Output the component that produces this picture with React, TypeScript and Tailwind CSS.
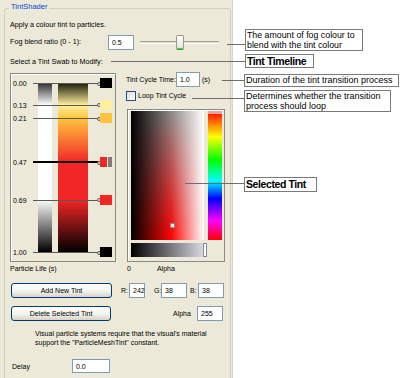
import React from "react";

const TRACK = 169;

const swabs = [
  { t: 0, label: "0.00", color: "#000000" },
  { t: 0.13, label: "0.13", color: "#fff0a0" },
  { t: 0.21, label: "0.21", color: "#ffc43c" },
  { t: 0.47, label: "0.47", color: "#f22626", selected: true },
  { t: 0.69, label: "0.69", color: "#f22626" },
  { t: 1, label: "1.00", color: "#000000" },
];

const TextBox = ({ value, className }: { value: string; className: string }) => (
  <div
    className={`flex items-center border border-[#7f9db9] bg-white pl-[3px] text-[7px] leading-none ${className}`}
  >
    {value}
  </div>
);

const XpButton = ({ label, className }: { label: string; className: string }) => (
  <button
    className={`flex items-center justify-center rounded-[3px] border border-[#003c74] bg-[linear-gradient(to_bottom,#ffffff,#f3f3ee_55%,#d8d2c6)] text-[7px] leading-none text-black ${className}`}
  >
    {label}
  </button>
);

const Timeline = () => (
  <div className="mt-[1px] h-[189px] w-[106px] border border-[#8a8a84] pt-[9px] shadow-[inset_1px_1px_0_#ffffff]">
    <div className="relative h-[169px]">
      <div className="flex h-full pl-[27px]">
        <div className="h-full w-[14px] bg-[linear-gradient(to_bottom,#2e2e2e_0%,#ffffff_13%,#ffffff_69%,#000000_100%)]" />
        <div className="ml-[6px] h-full w-[30px] bg-[linear-gradient(to_bottom,#1a1a08_0%,#fff0a0_13%,#ffc43c_21%,#f22626_47%,#f22626_69%,#000000_100%)]" />
      </div>
      {swabs.map((s) => (
        <div key={s.label} className="absolute left-0 right-0 h-0" style={{ top: `${s.t * TRACK}px` }}>
          <span className="absolute left-[2px] top-0 -translate-y-1/2 text-[7px] leading-none">
            {s.label}
          </span>
          <div
            className={
              s.selected
                ? "absolute left-[22px] top-[-1px] h-[2px] w-[66px] bg-black"
                : "absolute left-[22px] top-0 h-[1px] w-[66px] bg-[#5a5a5a]"
            }
          />
          <div className="absolute left-[86px] top-[-1.5px] h-[4px] w-[4px] rounded-full border border-[#5a5a5a] bg-[#ece9d8]" />
          {s.selected ? (
            <div className="absolute left-[89px] top-0 flex -translate-y-1/2 gap-[1px]">
              <div className="h-[10px] w-[7px]" style={{ background: s.color }} />
              <div className="h-[10px] w-[4px] bg-[#7c7c7c]" />
            </div>
          ) : (
            <div
              className="absolute left-[89px] top-0 h-[10px] w-[12px] -translate-y-1/2"
              style={{ background: s.color }}
            />
          )}
        </div>
      ))}
    </div>
  </div>
);

const ColourPicker = () => (
  <div className="ml-[1px] mt-[8px] h-[153px] w-[98px] border border-[#8a8a84] pl-[3px] pt-[1px] shadow-[inset_1px_1px_0_#ffffff]">
    <div className="flex gap-[4px]">
      <div className="relative h-[129px] w-[73px] bg-[linear-gradient(to_right,#000_0%,rgba(0,0,0,0)_55%,rgba(255,255,255,0)_55%,#fff_100%),linear-gradient(to_bottom,#8a8a8a_0%,#ff0000_100%)]">
        <div className="absolute left-[39px] top-[112px] h-[5px] w-[5px] border border-[#8a8a8a] bg-[#f4dede]" />
      </div>
      <div className="relative h-[129px] w-[14px] bg-[linear-gradient(to_bottom,#ff0000_0%,#ffff00_20%,#00ff00_38%,#00ffff_54%,#0000ff_68%,#ff00ff_85%,#ff0000_100%)]">
        <div className="absolute left-0 right-0 top-0 h-[3px] bg-[#eea3a3]" />
      </div>
    </div>
    <div className="relative mt-[3px] h-[14px] w-[77px] bg-[linear-gradient(to_right,#000000,#e6e7f0)]">
      <div className="absolute right-[1px] top-0 h-full w-[4px] border border-[#8a8a8a] bg-white" />
    </div>
  </div>
);

const Callout = ({
  children,
  className,
}: {
  children: React.ReactNode;
  className: string;
}) => (
  <div
    className={`absolute overflow-hidden whitespace-nowrap border border-[#7a7a7a] bg-white px-[1px] ${className}`}
  >
    {children}
  </div>
);

const Wire = ({ className }: { className: string }) => (
  <div className={`absolute h-[1px] bg-[#6e6e6e] ${className}`} />
);

export default function App() {
  return (
    <div className="relative flex h-[378px] w-[404px] overflow-hidden bg-white font-['Liberation_Sans',Arial,sans-serif] text-black">
      <div className="h-full w-[233px] border-r border-[#d9d6c6] bg-[#ece9d8] pl-[4px] pt-[8px]">
        <div className="relative h-[380px] w-[227px] rounded-[3px] border border-[#d0d0bf]">
          <span className="absolute left-[4px] top-[-6px] bg-[#ece9d8] px-[2px] text-[7.5px] leading-none text-[#0046d5]">
            TintShader
          </span>
          <div className="flex flex-col pl-[5px] pt-[11px]">
            <div className="h-[10px] text-[7.2px] leading-[10px]">Apply a colour tint to particles.</div>

            <div className="mt-[4px] flex h-[16px] items-center">
              <span className="w-[98px] text-[7.2px] leading-none">Fog blend ratio (0 - 1):</span>
              <TextBox value="0.5" className="h-[15px] w-[26px]" />
              <div className="relative ml-[6px] h-[16px] w-[79px]">
                <div className="absolute left-0 right-0 top-[7px] h-[3px] border-b border-t border-b-white border-t-[#a8a698] bg-[#dcd9cb]" />
                <div className="absolute left-[36px] top-[1px] h-[15px] w-[8px] rounded-[2px] border border-[#9a9a90] border-b-[#21a121] bg-[linear-gradient(to_bottom,#ffffff,#e6e4dc)] shadow-[inset_0_-1px_0_#4fd04f]" />
              </div>
            </div>

            <div className="mt-[7px] h-[10px] text-[7.2px] leading-[10px]">Select a Tint Swab to Modify:</div>

            <div className="mt-[5px] flex h-[190px]">
              <Timeline />
              <div className="ml-[10px] flex flex-col">
                <div className="flex h-[15px] items-center">
                  <span className="w-[50px] text-[7px] leading-none">Tint Cycle Time:</span>
                  <TextBox value="1.0" className="h-[15px] w-[24px]" />
                  <span className="ml-[2px] text-[7px] leading-none">(s)</span>
                </div>
                <div className="mt-[3px] flex h-[11px] items-center">
                  <div className="h-[10px] w-[10px] border border-[#1c5180] bg-[linear-gradient(135deg,#dcdcd7,#ffffff)]" />
                  <span className="ml-[2px] text-[7px] leading-none">Loop Tint Cycle</span>
                </div>
                <ColourPicker />
              </div>
            </div>

            <div className="mt-[1px] flex h-[10px] items-center text-[7px] leading-none">
              <span className="w-[117px]">Particle Life (s)</span>
              <span>0</span>
              <span className="ml-[26px]">Alpha</span>
            </div>

            <div className="mt-[10px] flex h-[15px] items-center">
              <XpButton label="Add New Tint" className="ml-[1px] h-[15px] w-[101px]" />
              <span className="ml-[9px] w-[8px] text-[7px] leading-none">R:</span>
              <TextBox value="242" className="h-[15px] w-[16px]" />
              <span className="ml-[9px] w-[7px] text-[7px] leading-none">G:</span>
              <TextBox value="38" className="h-[15px] w-[26px]" />
              <span className="ml-[3px] w-[8px] text-[7px] leading-none">B:</span>
              <TextBox value="38" className="h-[15px] w-[26px]" />
            </div>

            <div className="mt-[8px] flex h-[15px] items-center">
              <XpButton label="Delete Selected Tint" className="ml-[1px] h-[15px] w-[100px]" />
              <span className="ml-[62px] w-[24px] text-[7px] leading-none">Alpha</span>
              <TextBox value="255" className="h-[15px] w-[26px]" />
            </div>

            <div className="ml-[25px] mt-[8px] text-[7px] leading-[9px]">
              <div>Visual particle systems require that the visual&#39;s material</div>
              <div>support the &quot;ParticleMeshTint&quot; constant.</div>
            </div>

            <div className="mt-[12px] flex h-[14px] items-center">
              <span className="ml-[2px] w-[60px] text-[7px] leading-none">Delay</span>
              <TextBox value="0.0" className="h-[14px] w-[38px]" />
            </div>
          </div>
        </div>
      </div>

      <Wire className="left-[227px] top-[44px] w-[18px]" />
      <Wire className="left-[111px] top-[61px] w-[134px]" />
      <Wire className="left-[222px] top-[80px] w-[22px]" />
      <Wire className="left-[192px] top-[98px] w-[52px]" />
      <Wire className="left-[185px] top-[183px] w-[60px]" />

      <Callout className="left-[245px] top-[29px] w-[118px] text-[8.8px] leading-[10px]">
        <div>The amount of fog colour to</div>
        <div>blend with the tint colour</div>
      </Callout>
      <Callout className="left-[245px] top-[54px] w-[69px] text-[10.5px] font-bold leading-[12px] tracking-[-0.4px]">
        Tint Timeline
      </Callout>
      <Callout className="left-[244px] top-[74px] w-[155px] text-[9px] leading-[11px]">
        Duration of the tint transition process
      </Callout>
      <Callout className="left-[244px] top-[90px] w-[147px] text-[9px] leading-[10px]">
        <div>Determines whether the transition</div>
        <div>process should loop</div>
      </Callout>
      <Callout className="left-[244px] top-[177px] w-[73px] text-[10.5px] font-bold leading-[13px] tracking-[-0.4px]">
        Selected Tint
      </Callout>
    </div>
  );
}
